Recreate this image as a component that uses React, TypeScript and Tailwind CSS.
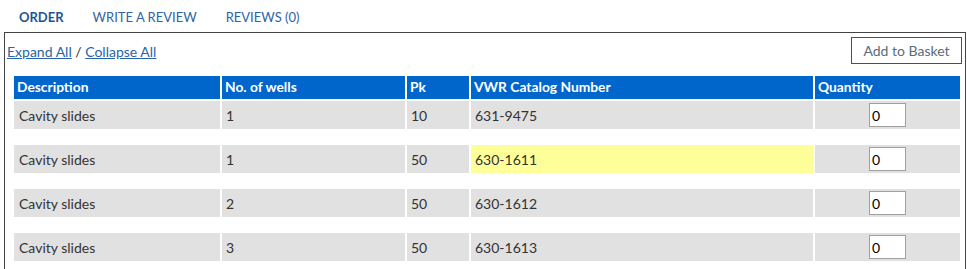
import React from "react";

const rows = [
  { d: "Cavity slides", w: "1", pk: "10", cat: "631-9475", hl: false },
  { d: "Cavity slides", w: "1", pk: "50", cat: "630-1611", hl: true },
  { d: "Cavity slides", w: "2", pk: "50", cat: "630-1612", hl: false },
  { d: "Cavity slides", w: "3", pk: "50", cat: "630-1613", hl: false },
];

export default function App() {
  return (
    <div className="w-[967px] h-[269px] overflow-hidden bg-white text-[14px] text-[#333]" style={{ fontFamily: "Lato, 'Open Sans', sans-serif" }}>
      <div className="flex h-[32px] items-center pl-[19px] gap-[29px] pt-[3px] text-[13px] text-[#2f62a6]">
        <span className="font-bold text-[#1f5596]">ORDER</span>
        <span>WRITE A REVIEW</span>
        <span>REVIEWS (0)</span>
      </div>
      <div className="ml-[4px] w-[962px] h-[300px] border border-[#444] p-[4px]">
        <div className="flex justify-between items-start">
          <div className="ml-[-2px] pt-[4px] text-[14px]">
            <a className="underline text-[#2a64a8] cursor-pointer">Expand All</a>
            <span> / </span>
            <a className="underline text-[#2a64a8] cursor-pointer">Collapse All</a>
          </div>
          <button className="w-[111px] h-[27px] border border-[#2d5878] text-[14px] text-[#5b6b7b] bg-white mr-[-1px]">
            Add to Basket
          </button>
        </div>
        <table className="mt-[10px] ml-[3px] border-separate border-spacing-[2px] table-fixed w-[950px]">
          <colgroup>
            <col className="w-[206px]" />
            <col className="w-[183px]" />
            <col className="w-[62px]" />
            <col className="w-[342px]" />
            <col className="w-[145px]" />
          </colgroup>
          <thead>
            <tr className="h-[23px] bg-[#0066cc] text-white text-left text-[13.8px]">
              <th className="px-[3px] font-bold">Description</th>
              <th className="px-[3px] font-bold">No. of wells</th>
              <th className="px-[3px] font-bold">Pk</th>
              <th className="px-[3px] font-bold">VWR Catalog Number</th>
              <th className="px-[3px] font-bold">Quantity</th>
            </tr>
          </thead>
          <tbody>
            {rows.map((r, i) => (
              <React.Fragment key={i}>
                {i > 0 && (
                  <tr className="h-[12px]">
                    <td colSpan={5}></td>
                  </tr>
                )}
                <tr className="h-[28px]">
                  <td className="bg-[#e1e1e1] px-[5px]">{r.d}</td>
                  <td className="bg-[#e1e1e1] px-[4px]">{r.w}</td>
                  <td className="bg-[#e1e1e1] px-[4px]">{r.pk}</td>
                  <td className={`${r.hl ? "bg-[#ffff99]" : "bg-[#e1e1e1]"} px-[4px]`}>{r.cat}</td>
                  <td className="bg-[#e1e1e1] p-0">
                    <div className="flex justify-center">
                      <input
                        defaultValue="0"
                        className="w-[37px] h-[24px] border border-[#a0a0a0] bg-white px-[2px] text-[14px] text-black outline-none"
                      />
                    </div>
                  </td>
                </tr>
              </React.Fragment>
            ))}
          </tbody>
        </table>
      </div>
    </div>
  );
}
